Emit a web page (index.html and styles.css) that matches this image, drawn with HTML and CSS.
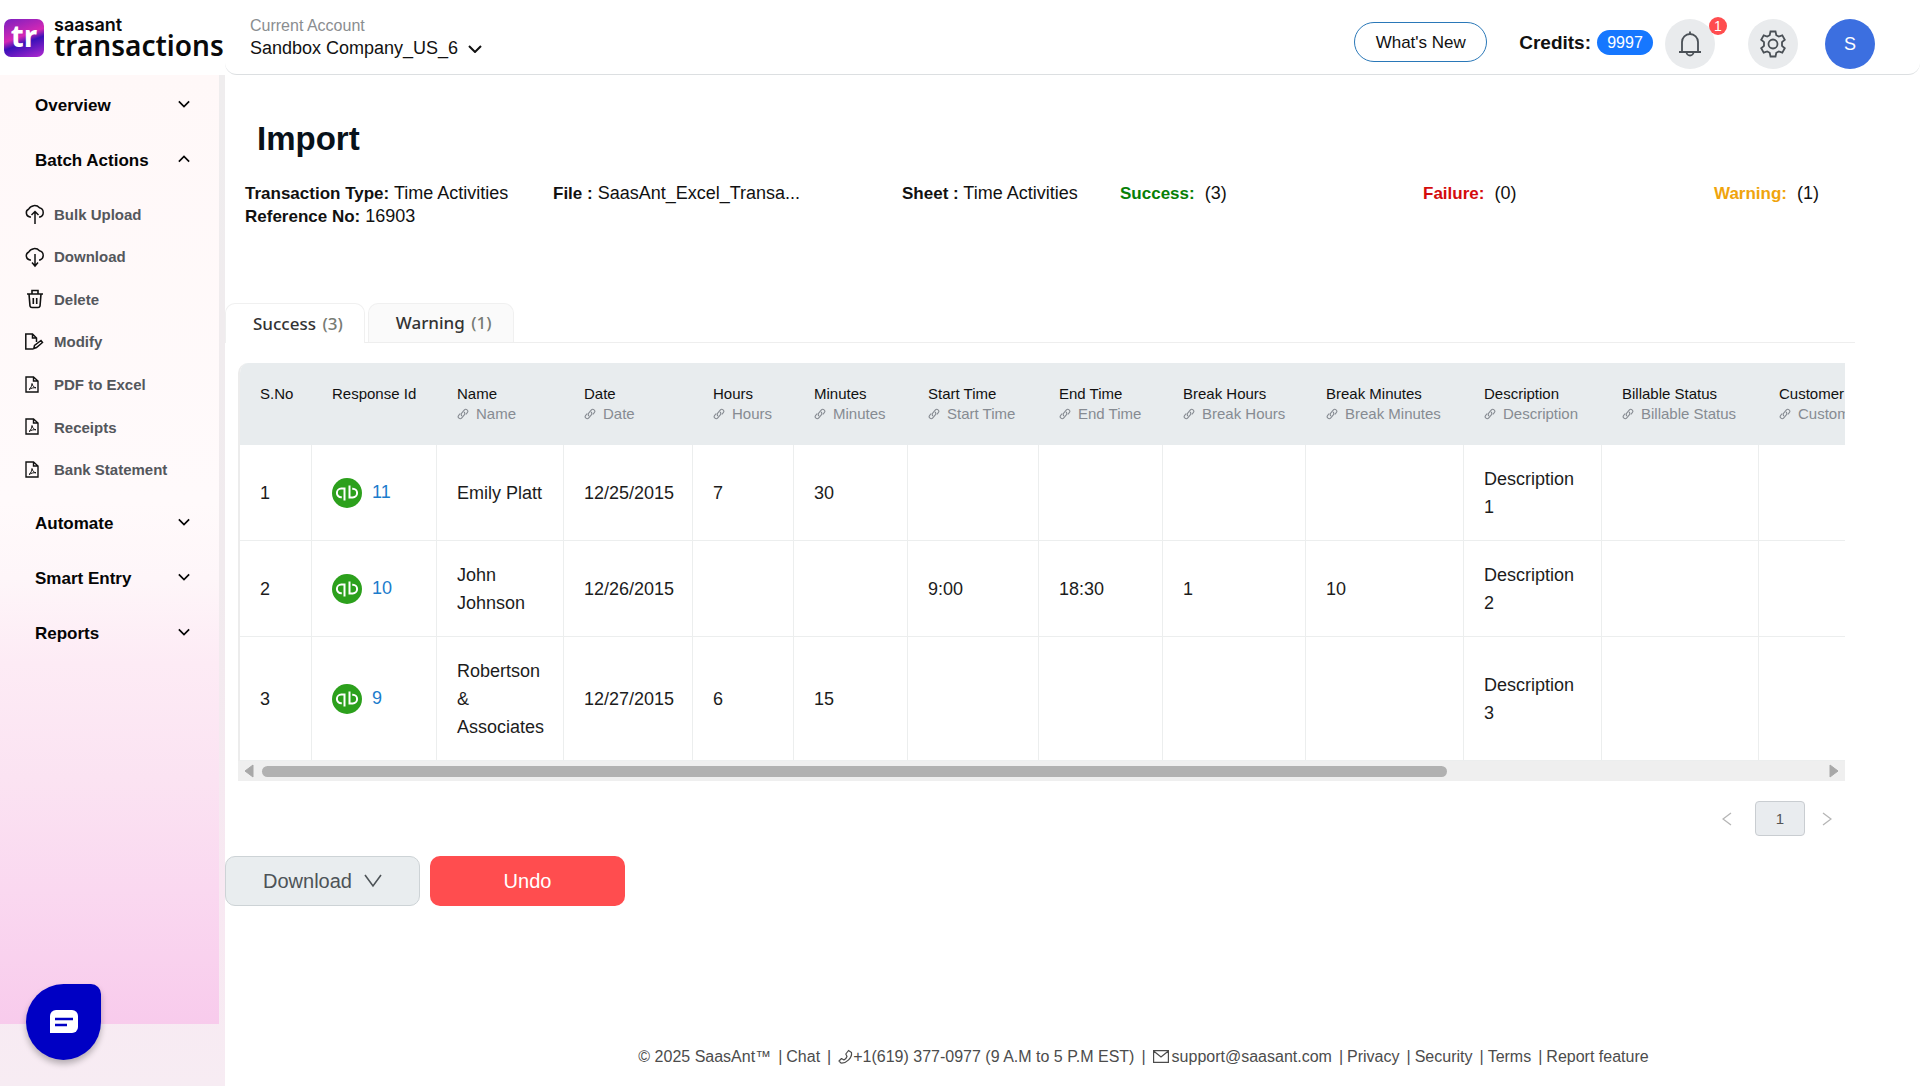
FILE: index.html
```html
<!DOCTYPE html>
<html lang="en">
<head>
<meta charset="utf-8">
<title>SaasAnt Transactions - Import</title>
<link rel="stylesheet" href="styles.css">
</head>
<body>
<svg class="sprite" aria-hidden="true">
  <symbol id="chevron" viewBox="0 0 14 8"><path d="M1 1l6 6 6-6" fill="none" stroke="currentColor" stroke-width="2"/></symbol>
  <symbol id="cloud-up" viewBox="0 0 20 22"><path d="M6 14H5A4.200 4.200 0 0 1 3.800 6 6.200 5.500 0 0 1 14.500 4.800 4.800 4.800 0 0 1 15 14h-1M10 21V9M6.500 12L10 8.500 13.500 12" fill="none" stroke="currentColor" stroke-width="1.500"/></symbol>
  <symbol id="cloud-down" viewBox="0 0 20 22"><path d="M6 14H5A4.200 4.200 0 0 1 3.800 6 6.200 5.500 0 0 1 14.500 4.800 4.800 4.800 0 0 1 15 14h-1M10 8v12M7 16.500L10 20 13 16.500" fill="none" stroke="currentColor" stroke-width="1.500"/></symbol>
  <symbol id="trash" viewBox="0 0 20 22"><path d="M2 6h16M7 6V2.500h6V6M4 6l1 12a2 2 0 0 0 2 1.500h6a2 2 0 0 0 2-1.500L16 6M8.300 10v6M11.700 10v6" fill="none" stroke="currentColor" stroke-width="1.600"/></symbol>
  <symbol id="modify" viewBox="0 0 20 22"><path d="M8 18H.8V3H7.500l4 4v4M7.500 3v4h4M8.800 17.500l.7-3 6.500-5 1.500 2-6 5z" fill="none" stroke="currentColor" stroke-width="1.500"/></symbol>
  <symbol id="pdf" viewBox="0 0 20 22"><path d="M1 3h7.500L13 7v11H1zM8.500 3v4H13" fill="none" stroke="currentColor" stroke-width="1.400"/><path d="M4 15.500c2-1.500 3-4 3-6 .500 2.500 2 4 4 4.300-2.500-.300-4.500.2-7 1.700z" fill="none" stroke="currentColor"/></symbol>
  <symbol id="link" viewBox="0 0 12 12"><path d="M5 8a2 2 0 0 1-.3-2.900l2.500-3a2 2 0 0 1 3.100 2.600L8.800 6.500M7 4a2 2 0 0 1 .3 2.900l-2.500 3a2 2 0 0 1-3.100-2.600L3.200 5.500" fill="none" stroke="currentColor" stroke-width="1.100"/></symbol>
  <symbol id="qb" viewBox="0 0 30 30"><circle cx="15" cy="15" r="15" fill="#2ca01c"/><path d="M12.500 10.600H9.200a4.300 4.300 0 0 0 0 8.600h.6M12.500 9.600v13M17.500 19.400h3.300a4.300 4.300 0 0 0 0-8.600h-.6M17.500 20.400V7.400" fill="none" stroke="#fff" stroke-width="2"/></symbol>
</svg>

<header class="topbar">
  <a class="brand" href="#">
    <span class="brand-mark">tr</span>
    <span class="brand-text"><span class="brand-small">saasant</span><span class="brand-big">transactions</span></span>
  </a>
  <div class="topbar-main">
    <div class="account">
      <span class="account-label">Current Account</span>
      <button class="account-button" type="button">Sandbox Company_US_6 <svg width="14" height="8"><use href="#chevron"/></svg></button>
    </div>
    <div class="top-actions">
      <button class="whats-new" type="button">What's New</button>
      <div class="credits"><strong>Credits:</strong><span class="credits-pill">9997</span></div>
      <button class="round bell" type="button" aria-label="Notifications">
        <svg width="26" height="28" viewBox="0 0 26 28" fill="none" stroke="currentColor" stroke-width="1.800"><path d="M2 22h22M5 22V12a8 8 0 0 1 16 0v10M13 4V1.500M9.500 22a3.500 3.500 0 0 0 7 0"/></svg>
        <span class="badge">1</span>
      </button>
      <button class="round gear" type="button" aria-label="Settings">
        <svg width="26" height="28" viewBox="0 0 26 28" fill="none" stroke="currentColor" stroke-width="1.800"><path d="M10.500 1.500h5l.8 3.700 2.500 1.400 3.500-1.200 2.500 4.300-2.800 2.500v3.600l2.800 2.500-2.500 4.300-3.500-1.200-2.500 1.400-.8 3.700h-5l-.8-3.700-2.500-1.400-3.500 1.200-2.500-4.300L4 15.800v-3.600L1.200 9.700l2.500-4.300 3.500 1.200 2.500-1.400z"/><circle cx="13" cy="14" r="4.500"/></svg>
      </button>
      <button class="round avatar" type="button">S</button>
    </div>
  </div>
</header>

<div class="layout">
  <nav class="sidebar">
    <div class="menu">
      <button class="group" type="button">Overview <svg width="12" height="8"><use href="#chevron"/></svg></button>
      <button class="group open" type="button">Batch Actions <svg width="12" height="8"><use href="#chevron"/></svg></button>
      <div class="submenu">
        <a href="#"><svg width="20" height="22"><use href="#cloud-up"/></svg>Bulk Upload</a>
        <a href="#"><svg width="20" height="22"><use href="#cloud-down"/></svg>Download</a>
        <a href="#"><svg width="20" height="22"><use href="#trash"/></svg>Delete</a>
        <a href="#"><svg width="20" height="22"><use href="#modify"/></svg>Modify</a>
        <a href="#"><svg width="20" height="22"><use href="#pdf"/></svg>PDF to Excel</a>
        <a href="#"><svg width="20" height="22"><use href="#pdf"/></svg>Receipts</a>
        <a href="#"><svg width="20" height="22"><use href="#pdf"/></svg>Bank Statement</a>
      </div>
      <button class="group" type="button">Automate <svg width="12" height="8"><use href="#chevron"/></svg></button>
      <button class="group" type="button">Smart Entry <svg width="12" height="8"><use href="#chevron"/></svg></button>
      <button class="group" type="button">Reports <svg width="12" height="8"><use href="#chevron"/></svg></button>
    </div>
  </nav>

  <main class="content">
    <h1>Import</h1>
    <div class="summary">
      <div><b>Transaction Type:</b> Time Activities<br><b>Reference No:</b> 16903</div>
      <div><b>File :</b> SaasAnt_Excel_Transa...</div>
      <div><b>Sheet :</b> Time Activities</div>
      <div><b class="ok">Success:</b>&nbsp; (3)</div>
      <div><b class="fail">Failure:</b>&nbsp; (0)</div>
      <div><b class="warn">Warning:</b>&nbsp; (1)</div>
    </div>

    <div class="tabs" role="tablist">
      <button class="tab active" type="button" role="tab" aria-selected="true">Success <span>(3)</span></button>
      <button class="tab" type="button" role="tab" aria-selected="false">Warning <span>(1)</span></button>
    </div>

    <section class="table-panel">
      <div class="table-view">
        <table>
          <colgroup><col class="c-no"><col class="c-id"><col class="c-name"><col class="c-date"><col class="c-hours"><col class="c-min"><col class="c-start"><col class="c-end"><col class="c-bh"><col class="c-bm"><col class="c-desc"><col class="c-bill"><col class="c-cust"></colgroup>
          <thead>
            <tr>
              <th>S.No</th>
              <th>Response Id</th>
              <th>Name<small><svg width="12" height="12"><use href="#link"/></svg>Name</small></th>
              <th>Date<small><svg width="12" height="12"><use href="#link"/></svg>Date</small></th>
              <th>Hours<small><svg width="12" height="12"><use href="#link"/></svg>Hours</small></th>
              <th>Minutes<small><svg width="12" height="12"><use href="#link"/></svg>Minutes</small></th>
              <th>Start Time<small><svg width="12" height="12"><use href="#link"/></svg>Start Time</small></th>
              <th>End Time<small><svg width="12" height="12"><use href="#link"/></svg>End Time</small></th>
              <th>Break Hours<small><svg width="12" height="12"><use href="#link"/></svg>Break Hours</small></th>
              <th>Break Minutes<small><svg width="12" height="12"><use href="#link"/></svg>Break Minutes</small></th>
              <th>Description<small><svg width="12" height="12"><use href="#link"/></svg>Description</small></th>
              <th>Billable Status<small><svg width="12" height="12"><use href="#link"/></svg>Billable Status</small></th>
              <th>Customer<small><svg width="12" height="12"><use href="#link"/></svg>Customer</small></th>
            </tr>
          </thead>
          <tbody>
            <tr><td>1</td><td><div class="resp"><svg width="30" height="30"><use href="#qb"/></svg><a href="#">11</a></div></td><td>Emily Platt</td><td>12/25/2015</td><td>7</td><td>30</td><td></td><td></td><td></td><td></td><td>Description 1</td><td></td><td></td></tr>
            <tr><td>2</td><td><div class="resp"><svg width="30" height="30"><use href="#qb"/></svg><a href="#">10</a></div></td><td>John Johnson</td><td>12/26/2015</td><td></td><td></td><td>9:00</td><td>18:30</td><td>1</td><td>10</td><td>Description 2</td><td></td><td></td></tr>
            <tr><td>3</td><td><div class="resp"><svg width="30" height="30"><use href="#qb"/></svg><a href="#">9</a></div></td><td>Robertson &amp; Associates</td><td>12/27/2015</td><td>6</td><td>15</td><td></td><td></td><td></td><td></td><td>Description 3</td><td></td><td></td></tr>
          </tbody>
        </table>
      </div>
      <div class="hscroll" aria-hidden="true">
        <svg width="10" height="14" viewBox="0 0 10 14"><path d="M9 1v12L1 7z" fill="#a8a8a8" stroke="#a8a8a8" stroke-linejoin="round"/></svg>
        <div class="track"><div class="thumb"></div></div>
        <svg width="10" height="14" viewBox="0 0 10 14"><path d="M1 1v12l8-6z" fill="#a8a8a8" stroke="#a8a8a8" stroke-linejoin="round"/></svg>
      </div>
      <div class="pager">
        <button class="prev" type="button" aria-label="Previous page"><svg width="10" height="14" viewBox="0 0 10 14"><path d="M9 1L1 7l8 6" fill="none" stroke="#b5b5b5" stroke-width="1.300"/></svg></button>
        <button class="current" type="button">1</button>
        <button type="button" aria-label="Next page"><svg width="10" height="14" viewBox="0 0 10 14"><path d="M1 1l8 6-8 6" fill="none" stroke="#b5b5b5" stroke-width="1.300"/></svg></button>
      </div>
    </section>

    <div class="actions">
      <button class="btn download" type="button">Download <svg width="18" height="14" viewBox="0 0 18 14"><path d="M1 1l8 11 8-11" fill="none" stroke="currentColor" stroke-width="1.600"/></svg></button>
      <button class="btn undo" type="button">Undo</button>
    </div>

    <footer class="footer">
      <span>© 2025 SaasAnt™</span><i>|</i><a href="#">Chat</a><i class="wide">|</i>
      <a href="#"><svg width="15" height="16" viewBox="0 0 15 16"><path d="M10.500 1.500L13.500 3.500c.8 5-5 11-10.500 10.500L1 12l2.500-2.500 2.500 1.500c1.500-.8 2.500-2 3-3.500L7.800 5z" fill="none" stroke="currentColor" stroke-width="1.200" stroke-linejoin="round"/></svg>+1(619) 377-0977 (9 A.M to 5 P.M EST)</a><i class="wide">|</i>
      <a href="#"><svg class="mail" width="16" height="13" viewBox="0 0 16 13"><path d="M.6.6h14.800v11.800H.6zM.6 1l7.400 6 7.400-6" fill="none" stroke="currentColor" stroke-width="1.200"/></svg>support@saasant.com</a><i>|</i>
      <a href="#">Privacy</a><i>|</i><a href="#">Security</a><i>|</i><a href="#">Terms</a><i>|</i><a href="#">Report feature</a>
    </footer>
  </main>
</div>

<button class="chat" type="button" aria-label="Open chat">
  <svg width="28" height="24" viewBox="0 0 28 24"><path d="M6 0h16a6 6 0 0 1 6 6v11a6 6 0 0 1-6 6H0V6a6 6 0 0 1 6-6z" fill="#fff"/><path d="M5 9h18M5 15h12" stroke="#0000c4" stroke-width="2.500"/></svg>
</button>
</body>
</html>
```
FILE: styles.css
```css
* { box-sizing: border-box; }

body {
  margin: 0;
  min-height: 100vh;
  display: flex;
  flex-direction: column;
  background: #fff;
  color: #111;
  font: 18px/23px "Liberation Sans", Arial, sans-serif;
}

button { font: inherit; color: inherit; background: none; border: 0; padding: 0; cursor: pointer; }
a { color: inherit; text-decoration: none; }
.sprite { display: none; }

/* Top bar */
.topbar { display: flex; height: 75px; }
.brand { display: flex; align-items: center; gap: 10px; width: 225px; padding-left: 4px; color: #0a0a0a; }
.brand-mark {
  width: 40px; height: 38px; border-radius: 7px;
  background: linear-gradient(160deg, #7a1fc0 0%, #d428b4 45%, #3a10b8 60%, #b52ad0 100%);
  color: #fff; text-align: center;
  font: 700 30px/34px "Noto Sans", sans-serif;
}
.brand-text { display: flex; flex-direction: column; }
.brand-small { font: 600 18px/14px Inter, sans-serif; }
.brand-big { font: 600 28px/26px "Noto Sans", sans-serif; }

.topbar-main {
  flex: 1; display: flex; justify-content: space-between;
  padding: 0 45px 0 25px;
  border-bottom: 1px solid #dcdfe1; border-radius: 0 0 12px 12px;
}
.account { display: flex; flex-direction: column; padding-top: 14px; }
.account-label { font-size: 16px; color: #8a8d90; }
.account-button { display: flex; align-items: center; gap: 10px; }
.top-actions { display: flex; align-items: center; padding-top: 10px; }
.whats-new { width: 133px; height: 40px; border: 1px solid #2a78b8; border-radius: 20px; font-size: 17px; margin-right: 32px; }
.credits { display: flex; align-items: center; gap: 6px; margin-right: 12px; font-size: 19px; }
.credits-pill { width: 56px; border-radius: 13px; background: #1677ff; color: #fff; text-align: center; font-size: 16px; line-height: 25px; }
.round { position: relative; display: grid; place-items: center; width: 50px; height: 50px; margin-top: 4px; border-radius: 50%; background: #e9ebed; color: #4a5056; }
.bell { margin-right: 33px; }
.gear { margin-right: 27px; }
.avatar { background: #3c6fe0; color: #fff; }
.badge { position: absolute; top: -2px; right: -12px; width: 18px; border-radius: 9px; background: #ff4d4f; color: #fff; font-size: 14px; line-height: 18px; }

.layout { flex: 1; display: flex; }

/* Sidebar */
.sidebar { width: 225px; padding: 0 6px 62px 0; display: flex; background: linear-gradient(#efedee 0%, #f1ebee 50%, #f8e8f2 80%, #f7ecf3 100%); }
.menu {
  flex: 1; padding-top: 3px;
  background: linear-gradient(#fff8f8 0%, #fffafb 45%, #fef6f9 53%, #fdebf5 62%, #fbe3f2 74%, #fad8f0 86%, #f8cbec 100%);
}
.group {
  display: flex; align-items: center; justify-content: space-between;
  width: 100%; height: 55px; padding: 0 29px 0 35px;
  color: #050505; font-size: 17px; font-weight: 700;
}
.group svg { margin-bottom: 4px; }
.open svg { transform: rotate(180deg); }
.submenu { display: grid; grid-auto-rows: 1fr; min-height: 308px; padding: 5px 0; color: #54575c; font-size: 15px; font-weight: 700; }
.submenu a { display: flex; align-items: center; gap: 9px; padding-left: 25px; }
.submenu svg { color: #111; }

/* Content */
.content { flex: 1; min-width: 0; display: flex; flex-direction: column; }
h1 { margin: 41px 0 0; padding-left: 32px; font-size: 33px; line-height: 46px; color: #08121a; }
.summary {
  display: grid; grid-template-columns: 308fr 349fr 218fr 303fr 291fr 206fr;
  margin-top: 20px; padding-left: 20px; font-size: 18px;
}
.summary > div { white-space: nowrap; }
.summary b { font-size: 17px; }
.ok { color: #078007; }
.fail { color: #d40c0c; }
.warn { color: #f0a40c; }

.tabs { display: flex; gap: 3px; margin: 75px 65px 0 0; border-bottom: 1px solid #eee; }
.tab {
  height: 39px; padding: 0 21px 0 27px;
  border: 1px solid #f0f0f0; border-bottom: 0; border-radius: 10px 10px 0 0;
  background: #fafafa; color: #333;
  font: 500 17px/24px "Noto Sans", sans-serif;
}
.tab.active { background: #fff; margin-bottom: -1px; height: 40px; }
.tab span { margin-left: 2px; color: #777b74; }

.table-panel { margin: 20px 75px 0 13px; }
.table-view { overflow: hidden; border-left: 2px solid #ececec; border-radius: 10px 0 0 0; }
table { width: 1980px; table-layout: fixed; border-collapse: separate; border-spacing: 0; }
.c-no { width: 72px; } .c-id { width: 125px; } .c-name { width: 127px; } .c-date { width: 129px; }
.c-hours { width: 101px; } .c-min { width: 114px; } .c-start { width: 131px; } .c-end { width: 124px; }
.c-bh { width: 143px; } .c-bm { width: 158px; } .c-desc { width: 138px; } .c-bill { width: 157px; }
th { height: 82px; padding: 21px 10px 0 20px; background: #e8ecee; text-align: left; vertical-align: top; font-size: 15px; line-height: 20px; font-weight: 400; white-space: nowrap; }
th small { display: flex; align-items: center; gap: 7px; color: #868b92; font-size: 15px; }
td { padding: 20px 18px 19px 20px; border-right: 1px solid #eceeee; border-bottom: 1px solid #eceeee; line-height: 28px; font-size: 18px; color: #1c1c1c; }
.resp { display: flex; align-items: center; gap: 10px; }
.resp a { color: #1b7ccc; margin-bottom: 3px; }

.hscroll { display: flex; align-items: center; gap: 8px; height: 20px; padding: 0 6px; background: #efefef; }
.track { flex: 1; }
.thumb { width: 76%; height: 11px; border-radius: 6px; background: #b1b1b1; }

.pager { display: flex; justify-content: flex-end; align-items: center; gap: 17px; margin-top: 20px; padding-right: 13px; font-size: 15px; color: #555; }
.pager button { display: flex; align-items: center; justify-content: center; }
.pager .prev { margin-right: 6px; }
.pager .current { width: 50px; height: 35px; border: 1px solid #c9cdd1; border-radius: 4px; background: #e9ecef; }

.actions { display: flex; gap: 10px; margin-top: 20px; }
.btn { display: flex; align-items: center; justify-content: center; gap: 12px; width: 195px; height: 50px; border-radius: 10px; font-size: 20px; }
.download { border: 1px solid #cdd3d6; background: #e9edef; color: #4d5357; }
.undo { background: #ff4d4f; color: #fff; }

.footer { display: flex; align-items: center; justify-content: center; margin-top: auto; padding: 0 0 18px 142px; color: #4c4c4c; font-size: 16px; white-space: nowrap; }
.footer a { display: flex; align-items: center; }
.footer i { font-style: normal; margin: 0 4px 0 7px; }
.footer .wide { margin: 0 7px; }
.mail { margin-right: 3px; }

/* Chat launcher */
.chat {
  position: fixed; left: 26px; bottom: 26px; width: 75px; height: 76px;
  display: grid; place-items: center;
  border-radius: 50% 10px 50% 50%; background: #0000c4; box-shadow: 0 4px 6px #0004;
}
```
